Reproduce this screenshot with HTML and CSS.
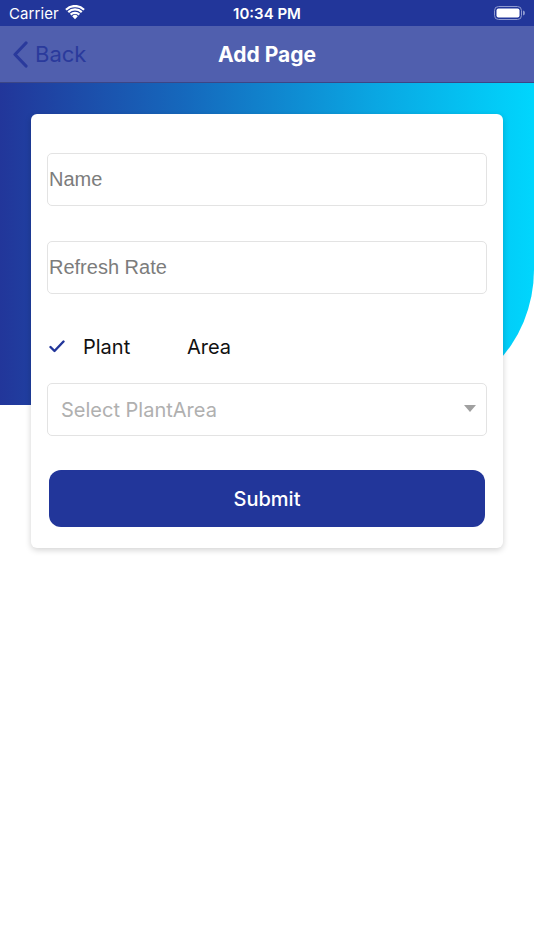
FILE: index.html
```html
<!DOCTYPE html>
<html>
<head>
<meta charset="utf-8">
<link rel="stylesheet" href="styles.css">
</head>
<body>
<div class="statusbar">
  <div class="sb-left">
    <span class="carrier">Carrier</span>
    <svg class="wifi" width="20" height="15" viewBox="0 0 20 15">
      <path d="M10 14.2 L7.2 11.2 A4 4 0 0 1 12.8 11.2 Z" fill="#fff"/>
      <path d="M4.9 8.8 A7.3 7.3 0 0 1 15.1 8.8 L13.6 10.4 A5.2 5.2 0 0 0 6.4 10.4 Z" fill="#fff"/>
      <path d="M2.5 6.3 A10.8 10.8 0 0 1 17.5 6.3 L16 7.9 A8.6 8.6 0 0 0 4 7.9 Z" fill="#fff"/>
      <path d="M0.2 3.9 A14 14 0 0 1 19.8 3.9 L18.3 5.5 A11.9 11.9 0 0 0 1.7 5.5 Z" fill="#fff"/>
    </svg>
  </div>
  <div class="time">10:34 PM</div>
  <div class="sb-right">
    <svg width="31" height="14" viewBox="0 0 31 14">
      <rect x="0.5" y="0.5" width="27" height="13" rx="4" fill="none" stroke="#8f9ad0" stroke-width="1"/>
      <rect x="2.5" y="2.5" width="23" height="9" rx="2" fill="#fff"/>
      <path d="M29 4.5 a2 2.5 0 0 1 0 5 Z" fill="#8f9ad0"/>
    </svg>
  </div>
</div>
<div class="navbar">
  <div class="back">
    <svg width="17" height="27" viewBox="0 0 17 27"><path d="M14 2 L3 13.5 L14 25" fill="none" stroke="#2a3a9c" stroke-width="3.2" stroke-linecap="round" stroke-linejoin="round"/></svg>
    <span>Back</span>
  </div>
  <div class="title">Add Page</div>
</div>
<div class="hero">
  <div class="card">
    <div class="field"><span class="ph">Name</span></div>
    <div class="field"><span class="ph">Refresh Rate</span></div>
    <div class="checkrow">
      <svg class="check" width="16" height="13" viewBox="0 0 16 13"><path d="M1.5 7 L5.5 11 L14.5 1.5" fill="none" stroke="#22369a" stroke-width="2.4" stroke-linecap="round" stroke-linejoin="round"/></svg>
      <span class="opt plant">Plant</span>
      <span class="opt">Area</span>
    </div>
    <div class="field select"><span class="ph2">Select PlantArea</span><span class="caret"></span></div>
    <button class="submit">Submit</button>
  </div>
</div>
</body>
</html>
```
FILE: styles.css
```css
* { box-sizing: border-box; }
html, body { margin: 0; padding: 0; background: #fff; }
body { width: 534px; height: 950px; overflow: hidden; font-family: "Inter", "Liberation Sans", sans-serif; }

.statusbar {
  height: 26px;
  background: #22369a;
  color: #fff;
  display: flex;
  align-items: center;
  justify-content: space-between;
  padding: 0 9px 0 9px;
  position: relative;
}
.sb-left { display: flex; align-items: center; gap: 6px; }
.carrier { font-size: 15px; font-family: "Inter", sans-serif; letter-spacing: 0.1px; }
.wifi { margin-top: -2px; }
.time {
  position: absolute;
  left: 0; right: 0; text-align: center;
  font-size: 15px; font-weight: 600;
  pointer-events: none;
}
.sb-right { display: flex; align-items: center; padding-right: 0; }

.navbar {
  height: 57px;
  background: #505fae;
  border-bottom: 1px solid #3c4686;
  display: flex;
  align-items: center;
  position: relative;
  padding-left: 12px;
}
.back { display: flex; align-items: center; gap: 6px; color: #2a3a9c; font-size: 22px; }
.back svg { margin-top: 1px; }
.title {
  position: absolute; left: 0; right: 0; text-align: center;
  color: #fff; font-size: 21px; font-weight: 700;
  pointer-events: none;
}

.hero {
  height: 322px;
  background: linear-gradient(90deg, #22369a 0%, #1569bd 35%, #0aa6e2 70%, #00d6fd 100%);
  border-bottom-right-radius: 135px;
  padding: 31px 31px 0 31px;
}
.card {
  background: #fff;
  border-radius: 6px;
  box-shadow: 0 2px 6px rgba(0,0,0,0.18);
  padding: 39px 16px 21px 16px;
  display: flex;
  flex-direction: column;
}
.field {
  height: 53px;
  border: 1px solid #e3e3e3;
  border-radius: 5px;
  display: flex;
  align-items: center;
  padding-left: 1px;
}
.field + .field { margin-top: 35px; }
.ph { font-family: "Liberation Sans", Arial, sans-serif; font-size: 20px; color: #7c7c7c; }
.checkrow {
  height: 30px;
  margin: 38px 0 21px 0;
  display: flex;
  align-items: center;
  padding-left: 2px;
}
.check { margin-top: -2px; }
.opt { font-size: 20px; color: #111; font-family: "Inter", sans-serif; }
.plant { margin-left: 18px; width: 104px; }
.select { padding-left: 13px; justify-content: space-between; padding-right: 10px; }
.ph2 { font-family: "Inter", "Liberation Sans", sans-serif; font-size: 20px; color: #b0b0b0; }
.caret {
  width: 0; height: 0;
  border-left: 6px solid transparent;
  border-right: 6px solid transparent;
  border-top: 7px solid #a0a0a0;
  margin-top: -3px;
}
.submit {
  margin: 34px 2px 0 2px;
  height: 57px;
  border: none;
  border-radius: 12px;
  background: #22369a;
  color: #fff;
  font-family: "Inter", sans-serif;
  font-size: 20px;
  font-weight: 500;
}
```
